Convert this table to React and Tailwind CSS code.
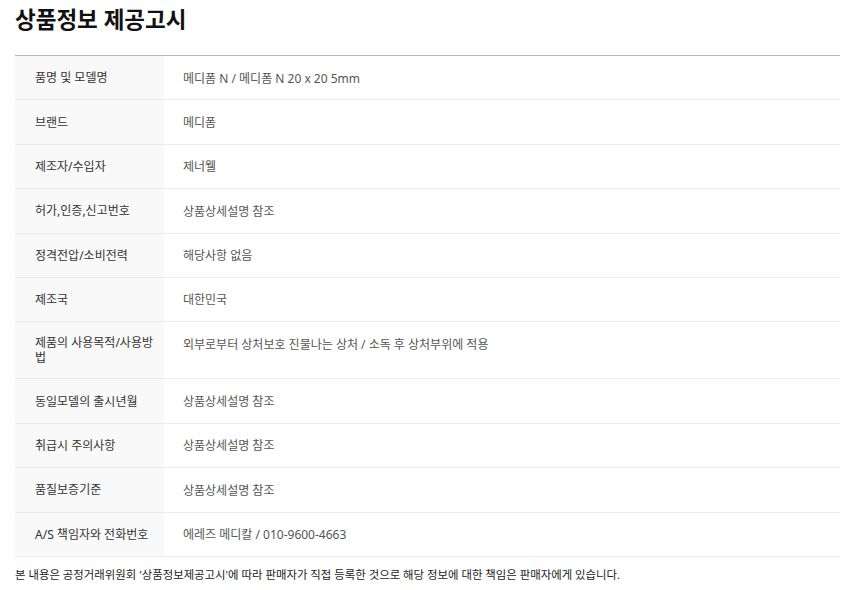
import React from "react";

const rows = [
  ["품명 및 모델명", "메디폼 N / 메디폼 N 20 x 20 5mm"],
  ["브랜드", "메디폼"],
  ["제조자/수입자", "제너웰"],
  ["허가,인증,신고번호", "상품상세설명 참조"],
  ["정격전압/소비전력", "해당사항 없음"],
  ["제조국", "대한민국"],
  ["제품의 사용목적/사용방법", "외부로부터 상처보호 진물나는 상처 / 소독 후 상처부위에 적용"],
  ["동일모델의 출시년월", "상품상세설명 참조"],
  ["취급시 주의사항", "상품상세설명 참조"],
  ["품질보증기준", "상품상세설명 참조"],
  ["A/S 책임자와 전화번호", "에레즈 메디칼 / 010-9600-4663"],
];

export default function App() {
  return (
    <div
      className="w-[862px] h-[590px] bg-white px-[15px] pt-[5px]"
      style={{ fontFamily: '"Noto Sans", "Noto Sans CJK KR", sans-serif' }}
    >
      <h1 className="text-[22.5px] font-bold leading-[30px] text-[#111] w-[825px]">상품정보 제공고시</h1>
      <div className="mt-[20px] w-[825px] border-t border-[#b8b8b8]">
        {rows.map(([k, v], i) => (
          <div key={i} className="flex border-b border-[#ebebeb] min-h-[44.4px]">
            <div className="w-[149px] shrink-0 bg-[#f9f9f9] pl-[20px] pr-[6px] py-[13px] flex items-center text-[12px] leading-[15px] text-[#333]">
              {k}
            </div>
            <div className="flex-1 pl-[19px] pr-[20px] pt-[14.5px] pb-[13px] text-[12px] leading-[15px] text-[#555]">
              {v}
            </div>
          </div>
        ))}
      </div>
      <p className="mt-[10px] text-[11.4px] leading-[15px] text-[#222]">
        본 내용은 공정거래위원회 '상품정보제공고시'에 따라 판매자가 직접 등록한 것으로 해당 정보에 대한 책임은 판매자에게 있습니다.
      </p>
    </div>
  );
}
